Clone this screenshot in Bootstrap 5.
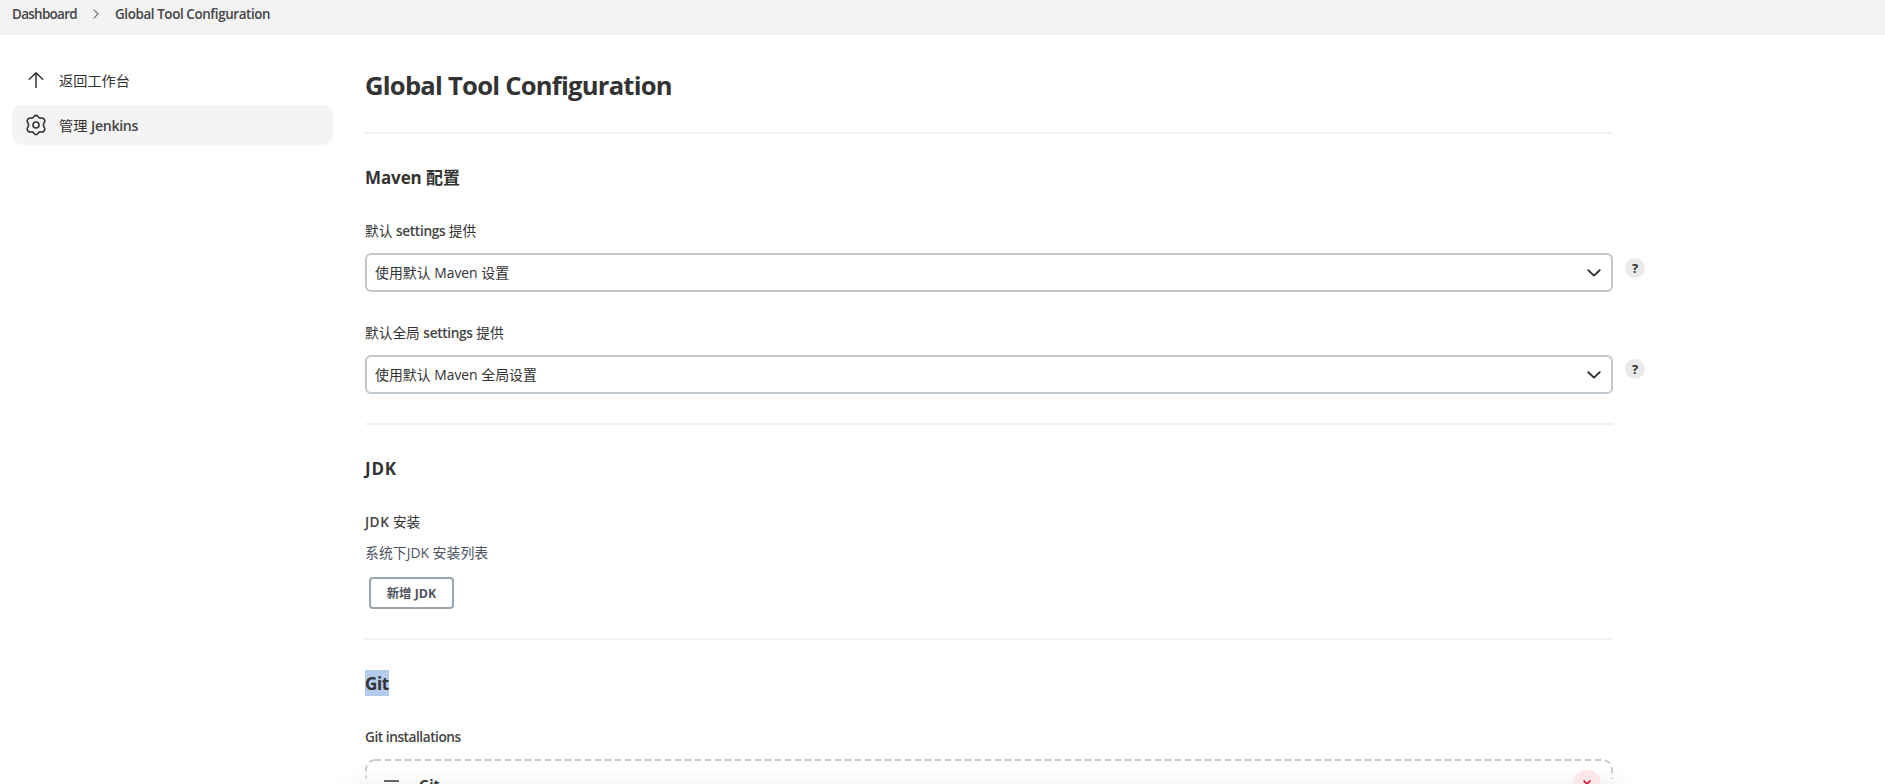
<!DOCTYPE html>
<html lang="zh-CN">
<head>
<meta charset="utf-8">
<title>Global Tool Configuration</title>
<link href="https://cdn.jsdelivr.net/npm/bootstrap@5.3.0/dist/css/bootstrap.min.css" rel="stylesheet">
<style>
html, body { height: 100%; overflow: hidden; }
body { font-family: "Open Sans", "Noto Sans CJK SC", sans-serif; font-size: 14px; line-height: 20px; color: #333; }
.latin { font-weight: 600; letter-spacing: -.35px; color: #444; }
.crumbs { height: 35px; background: #f3f3f3; padding: 4px 12px 0; font-size: 13.4px; --bs-breadcrumb-margin-bottom: 0; }
.c-home { letter-spacing: -.67px; }
.c-page { letter-spacing: -.39px; }
.side { width: 345px; padding: 25px 12px 0; }
.task { height: 40px; width: 321px; border-radius: 10px; padding-left: 12px; gap: 11px; margin-bottom: 5px; color: #333; font-size: 14.2px; }
.task > span { position: relative; top: 1px; }
.task.active { background: #f4f4f4; }
.config { width: 1248px; margin-left: 20px; }
.page-title { font-size: 25.6px; font-weight: 700; line-height: 36px; margin: 33px 0 28px; letter-spacing: -.76px; }
.rule { height: 2px; background: #f2f2f2; }
.rule-gap { margin-top: 29px; }
.sect { font-size: 17px; line-height: 26px; font-weight: 700; margin: 31px 0 30px; letter-spacing: -.1px; }
.jdk-head { letter-spacing: .8px; }
.lbl { display: block; line-height: 20px; margin-bottom: 12px; font-size: 13.7px; }
.lbl-next { margin-top: 31px; }
.jdk { letter-spacing: .5px; }
.pick { height: 39px; border: 2px solid #c0cad0; border-radius: 6px; padding: 0 10px 0 8px; color: #333; font-size: 13.9px; }
.help { position: absolute; left: 1260px; top: 5px; width: 20px; height: 20px; border-radius: 50%; background: #e9e9e9; font-size: 13px; font-weight: 700; }
.help-next { top: 4px; }
.desc { color: #4d545d; line-height: 20px; margin-top: 11px; font-size: 13.9px; }
.add-btn { width: 85px; height: 32px; border: 2px solid #98a6b1; border-radius: 4px; margin: 14px 0 0 4px; padding: 2px 0 0; font-size: 12.4px; font-weight: 700; color: #4d545d; line-height: 1; display: block; }
.picked { background: #b3cbec; display: inline-block; letter-spacing: -.4px; height: 26px; line-height: 28px; margin-top: -1px; margin-bottom: 1px; vertical-align: top; }
.g-inst { letter-spacing: -.47px; }
.installer { border-radius: 10px; height: 25px; overflow: hidden; z-index: 1; }
.frame { left: 0; top: 0; }
.grip { left: 19px; top: 21px; }
.tool-name { left: 54px; top: 16px; font-size: 14px; font-weight: 700; line-height: 20px; }
.remove { right: 12px; top: 11px; width: 28px; height: 28px; border-radius: 50%; background: #fbe7ea; }
.fade-bar { position: absolute; left: 335px; width: 1304px; bottom: 0; height: 14px; background: linear-gradient(rgba(245,245,245,0), rgba(235,235,235,.4)); -webkit-mask-image: linear-gradient(90deg, transparent, #000 30px, #000 1274px, transparent); }
</style>
</head>
<body class="position-relative">
<nav class="crumbs">
  <div class="breadcrumb d-flex align-items-center">
    <span class="latin c-home">Dashboard</span>
    <svg class="mx-3" width="6" height="10" viewBox="0 0 6 10" fill="none" stroke="#777" stroke-width="1.2"><path d="M.7 .7 5 5 .7 9.3"/></svg>
    <span class="latin c-page">Global Tool Configuration</span>
  </div>
</nav>
<div class="d-flex">
  <aside class="side flex-shrink-0">
    <a class="task d-flex align-items-center text-decoration-none">
      <svg width="24" height="24" viewBox="0 0 24 24" fill="none" stroke="#333" stroke-width="1.5"><path d="M12 19.5V5M5.3 11.3 12 4.8l6.7 6.5" stroke-linejoin="round" stroke-linecap="round"/></svg>
      <span>返回工作台</span>
    </a>
    <a class="task active d-flex align-items-center text-decoration-none">
      <svg width="24" height="24" viewBox="0 0 24 24" fill="none" stroke="#333" stroke-width="1.6"><path stroke-linejoin="round" d="M10 3.5Q12 1.2 14 3.5Q14.8 5.4 17 5Q20 4.6 20.8 7.5Q21 9 20 10Q18.8 12 20 14Q21 15 20.8 16.5Q20 19.4 17 19Q14.8 18.6 14 20.5Q12 22.8 10 20.5Q9.2 18.6 7 19Q4 19.4 3.2 16.5Q3 15 4 14Q5.2 12 4 10Q3 9 3.2 7.5Q4 4.6 7 5Q9.2 5.4 10 3.5Z"/><circle cx="12" cy="12" r="3"/></svg>
      <span>管理 <span class="latin">Jenkins</span></span>
    </a>
  </aside>
  <main class="config">
    <h1 class="page-title">Global Tool Configuration</h1>
    <div class="rule"></div>
    <h2 class="sect">Maven 配置</h2>
    <label class="lbl">默认 <span class="latin">settings</span> 提供</label>
    <div class="position-relative">
      <div class="pick d-flex align-items-center justify-content-between"><span>使用默认 Maven 设置</span>
        <svg width="14" height="8" viewBox="0 0 14 8" fill="none" stroke="#333" stroke-width="1.9"><path d="M1.3 1.2 7 6.6l5.7-5.4" stroke-linecap="round" stroke-linejoin="round"/></svg></div>
      <span class="help d-flex align-items-center justify-content-center">?</span>
    </div>
    <label class="lbl lbl-next">默认全局 <span class="latin">settings</span> 提供</label>
    <div class="position-relative">
      <div class="pick d-flex align-items-center justify-content-between"><span>使用默认 Maven 全局设置</span>
        <svg width="14" height="8" viewBox="0 0 14 8" fill="none" stroke="#333" stroke-width="1.9"><path d="M1.3 1.2 7 6.6l5.7-5.4" stroke-linecap="round" stroke-linejoin="round"/></svg></div>
      <span class="help help-next d-flex align-items-center justify-content-center">?</span>
    </div>
    <div class="rule rule-gap"></div>
    <h2 class="sect jdk-head">JDK</h2>
    <label class="lbl mb-0"><span class="latin jdk">JDK</span> 安装</label>
    <div class="desc">系统下JDK 安装列表</div>
    <button class="btn add-btn">新增 JDK</button>
    <div class="rule rule-gap"></div>
    <h2 class="sect"><span class="picked">Git</span></h2>
    <label class="lbl"><span class="latin g-inst">Git installations</span></label>
    <div class="installer position-relative">
      <svg class="frame position-absolute" width="1248" height="90" fill="none" stroke="#c0cad0" stroke-width="2" stroke-dasharray="6 4"><rect x="1" y="1" width="1246" height="100" rx="9"/></svg>
      <svg class="grip position-absolute" width="16" height="12" stroke="#333" stroke-width="1.4"><path d="M0 1h15M0 6h15M0 11h15"/></svg>
      <span class="tool-name position-absolute">Git</span>
      <span class="remove position-absolute d-flex align-items-center justify-content-center"><svg width="8" height="8" stroke="#d8153b" stroke-width="1.7"><path d="M.6.6l6.8 6.8M7.4.6.6 7.4"/></svg></span>
    </div>
  </main>
</div>
<div class="fade-bar"></div>
<script src="https://cdn.jsdelivr.net/npm/bootstrap@5.3.0/dist/js/bootstrap.bundle.min.js"></script>
</body>
</html>
